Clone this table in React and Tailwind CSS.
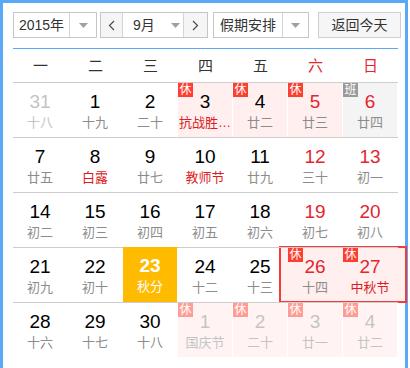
import React from 'react'

const weekdays = ['一', '二', '三', '四', '五', '六', '日']

// kind: prev / next (faded), badge: rest / work
const rows = [
  [
    { d: 31, l: '十八', kind: 'faded' },
    { d: 1, l: '十九' },
    { d: 2, l: '二十' },
    { d: 3, l: '抗战胜…', fest: true, badge: 'rest' },
    { d: 4, l: '廿二', badge: 'rest' },
    { d: 5, l: '廿三', badge: 'rest' },
    { d: 6, l: '廿四', badge: 'work' },
  ],
  [
    { d: 7, l: '廿五' },
    { d: 8, l: '白露', fest: true },
    { d: 9, l: '廿七' },
    { d: 10, l: '教师节', fest: true },
    { d: 11, l: '廿九' },
    { d: 12, l: '三十' },
    { d: 13, l: '初一' },
  ],
  [
    { d: 14, l: '初二' },
    { d: 15, l: '初三' },
    { d: 16, l: '初四' },
    { d: 17, l: '初五' },
    { d: 18, l: '初六' },
    { d: 19, l: '初七' },
    { d: 20, l: '初八' },
  ],
  [
    { d: 21, l: '初九' },
    { d: 22, l: '初十' },
    { d: 23, l: '秋分', selected: true },
    { d: 24, l: '十二' },
    { d: 25, l: '十三' },
    { d: 26, l: '十四', badge: 'rest', ranged: true },
    { d: 27, l: '中秋节', fest: true, badge: 'rest', ranged: true },
  ],
  [
    { d: 28, l: '十六' },
    { d: 29, l: '十七' },
    { d: 30, l: '十八' },
    { d: 1, l: '国庆节', kind: 'next', badge: 'rest' },
    { d: 2, l: '二十', kind: 'next', badge: 'rest' },
    { d: 3, l: '廿一', kind: 'next', badge: 'rest' },
    { d: 4, l: '廿二', kind: 'next', badge: 'rest' },
  ],
]

const Caret = () => (
  <svg width="9" height="5" viewBox="0 0 9 5">
    <polygon points="0,0 9,0 4.5,5" fill="#a0a0a0" />
  </svg>
)

const Chevron = ({ dir }) => (
  <svg width="7" height="11" viewBox="0 0 7 11">
    <polyline
      points={dir === 'left' ? '6,1 1.5,5.5 6,10' : '1,1 5.5,5.5 1,10'}
      fill="none"
      stroke="#4a4a4a"
      strokeWidth="1.2"
    />
  </svg>
)

const DayCell = ({ cell, col }) => {
  const weekend = col >= 5
  const faded = cell.kind === 'faded' || cell.kind === 'next'

  let bg = 'bg-transparent'
  if (cell.selected) bg = 'bg-[#ffbb00]'
  else if (cell.ranged) bg = 'bg-transparent'
  else if (cell.kind === 'next') bg = 'bg-[#fff4f3]'
  else if (cell.badge === 'rest') bg = 'bg-[#fff0ef]'
  else if (cell.badge === 'work') bg = 'bg-[#f4f4f4]'

  let num = 'text-black'
  if (faded) num = 'text-[#c4c4c4]'
  else if (cell.selected) num = 'text-white'
  else if (weekend) num = 'text-[#e3262f]'

  let lunar = 'text-[#8c8c8c]'
  if (faded) lunar = 'text-[#c4c4c4]'
  else if (cell.selected) lunar = 'text-white'
  else if (cell.fest) lunar = 'text-[#dc1c22]'

  return (
    <div className={`relative z-10 w-[55px] h-[55px] border-t ${cell.selected ? 'border-[#ffbb00]' : 'border-[#cdcdcd]'}`}>
      <div className={`relative w-[54px] ${cell.selected ? 'h-[55px] -mt-px' : 'h-[54px]'} ${bg} flex flex-col items-center pt-[8px]`}>
        {cell.badge && (
          <span
            className={`absolute left-0 top-0 w-[15px] h-[14px] flex items-center justify-center text-[12px] leading-none text-white ${
              cell.badge === 'work' ? 'bg-[#9a9a9a]' : cell.kind === 'next' ? 'bg-[#ff9d95]' : 'bg-[#fd3f31]'
            }`}
          >
            {cell.badge === 'work' ? '班' : '休'}
          </span>
        )}
        <span className={`text-[19px] leading-[22px] ${cell.selected ? 'font-bold' : ''} ${num}`}>{cell.d}</span>
        <span className={`mt-[2px] text-[13px] leading-[16px] whitespace-nowrap ${lunar}`}>{cell.l}</span>
      </div>
    </div>
  )
}

export default function App () {
  return (
    <div className="w-[410px] h-[368px] bg-white font-['Liberation_Sans','Noto_Sans_CJK_SC',sans-serif]">
      <div className="relative w-[408px] h-[368px] border-[3px] border-b-0 border-[#5aa9f6] pl-[10px] pt-[9px]">
        <div className="flex items-center h-[26px] text-[14px] text-[#333]">
          <div className="flex h-[26px] w-[84px] border border-[#c6c6c6] bg-white">
            <div className="w-[56px] flex items-center justify-center border-r border-[#d4d4d4]">2015年</div>
            <div className="flex-1 flex items-center justify-center"><Caret /></div>
          </div>
          <div className="ml-[3px] flex h-[26px] w-[108px] border border-[#c6c6c6] bg-white">
            <div className="w-[22px] flex items-center justify-center bg-[#f5f5f5] border-r border-[#d4d4d4]"><Chevron dir="left" /></div>
            <div className="flex-1 flex items-center pl-[10px] gap-[16px]">
              <span>9月</span>
              <Caret />
            </div>
            <div className="w-[24px] flex items-center justify-center bg-[#f5f5f5] border-l border-[#d4d4d4]"><Chevron dir="right" /></div>
          </div>
          <div className="ml-[5px] flex h-[26px] w-[96px] border border-[#c6c6c6] bg-white">
            <div className="w-[69px] flex items-center justify-center border-r border-[#d4d4d4]">假期安排</div>
            <div className="flex-1 flex items-center justify-center"><Caret /></div>
          </div>
          <div className="ml-[9px] flex h-[26px] w-[83px] items-center justify-center border border-[#cfcfcf] bg-[#f6f6f6]">返回今天</div>
        </div>

        <div className="mt-[10px] w-[385px] h-px bg-[#5aa9f6]" />

        <div className="flex w-[385px] h-[33px] items-center pt-[2px]">
          {weekdays.map((w, i) => (
            <div key={w} className={`w-[55px] text-center text-[15px] ${i >= 5 ? 'text-[#e3262f]' : 'text-[#333]'}`}>{w}</div>
          ))}
        </div>

        <div className="relative w-[385px]">
          <div className="absolute z-0 left-[266px] top-[164px] w-[128px] h-[57px] border-2 border-[#f53a3a] bg-[#fff0ef]" />
          {rows.map((row, r) => (
            <div key={r} className="flex">
              {row.map((cell, c) => (
                <DayCell key={c} cell={cell} col={c} />
              ))}
            </div>
          ))}
        </div>
      </div>
    </div>
  )
}
